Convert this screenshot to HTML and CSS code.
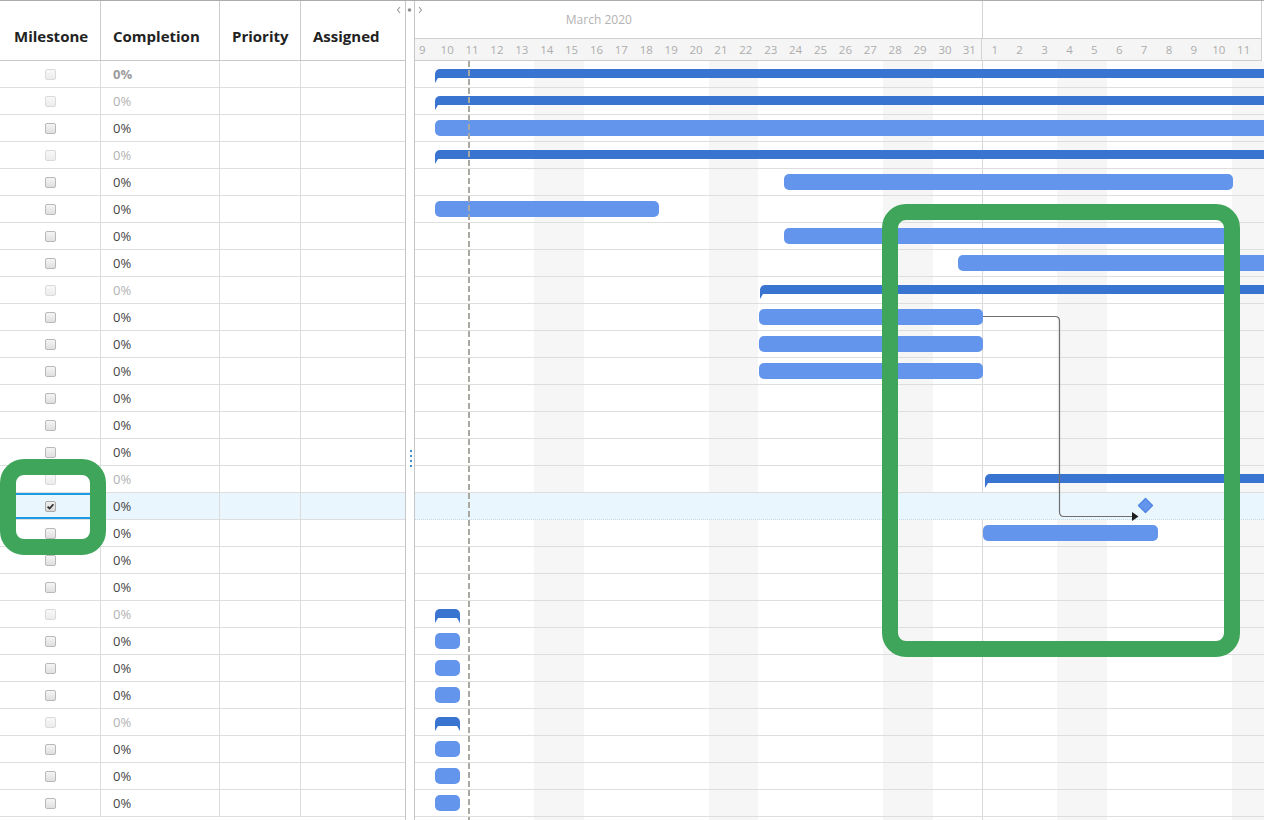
FILE: index.html
```html
<!DOCTYPE html>
<html>
<head>
<meta charset="utf-8">
<link rel="stylesheet" href="styles.css">
</head>
<body>
<div class="gantt">
  <div class="grid">
    <div class="grid-head">
      <div class="hc hc-first">Milestone</div>
      <div class="hc">Completion</div>
      <div class="hc">Priority</div>
      <div class="hc hc-last">Assigned</div>
    </div>
    <div class="grid-body">
      <div class="gr"><div class="c c-ms"><span class="cb cb-light"></span></div><div class="c c-pct pct-bold">0%</div><div class="c"></div><div class="c c-last"></div></div>
      <div class="gr"><div class="c c-ms"><span class="cb cb-light"></span></div><div class="c c-pct pct-light">0%</div><div class="c"></div><div class="c c-last"></div></div>
      <div class="gr"><div class="c c-ms"><span class="cb"></span></div><div class="c c-pct">0%</div><div class="c"></div><div class="c c-last"></div></div>
      <div class="gr"><div class="c c-ms"><span class="cb cb-light"></span></div><div class="c c-pct pct-light">0%</div><div class="c"></div><div class="c c-last"></div></div>
      <div class="gr"><div class="c c-ms"><span class="cb"></span></div><div class="c c-pct">0%</div><div class="c"></div><div class="c c-last"></div></div>
      <div class="gr"><div class="c c-ms"><span class="cb"></span></div><div class="c c-pct">0%</div><div class="c"></div><div class="c c-last"></div></div>
      <div class="gr"><div class="c c-ms"><span class="cb"></span></div><div class="c c-pct">0%</div><div class="c"></div><div class="c c-last"></div></div>
      <div class="gr"><div class="c c-ms"><span class="cb"></span></div><div class="c c-pct">0%</div><div class="c"></div><div class="c c-last"></div></div>
      <div class="gr"><div class="c c-ms"><span class="cb cb-light"></span></div><div class="c c-pct pct-light">0%</div><div class="c"></div><div class="c c-last"></div></div>
      <div class="gr"><div class="c c-ms"><span class="cb"></span></div><div class="c c-pct">0%</div><div class="c"></div><div class="c c-last"></div></div>
      <div class="gr"><div class="c c-ms"><span class="cb"></span></div><div class="c c-pct">0%</div><div class="c"></div><div class="c c-last"></div></div>
      <div class="gr"><div class="c c-ms"><span class="cb"></span></div><div class="c c-pct">0%</div><div class="c"></div><div class="c c-last"></div></div>
      <div class="gr"><div class="c c-ms"><span class="cb"></span></div><div class="c c-pct">0%</div><div class="c"></div><div class="c c-last"></div></div>
      <div class="gr"><div class="c c-ms"><span class="cb"></span></div><div class="c c-pct">0%</div><div class="c"></div><div class="c c-last"></div></div>
      <div class="gr"><div class="c c-ms"><span class="cb"></span></div><div class="c c-pct">0%</div><div class="c"></div><div class="c c-last"></div></div>
      <div class="gr"><div class="c c-ms"><span class="cb cb-light"></span></div><div class="c c-pct pct-light">0%</div><div class="c"></div><div class="c c-last"></div></div>
      <div class="gr gr-sel"><div class="c c-ms c-focus"><span class="cb cb-on"><svg width="9" height="9" viewBox="0 0 9 9"><path d="M1.6 4.6 L3.6 6.6 L7.4 2.2" fill="none" stroke="#2b2b2b" stroke-width="1.7"/></svg></span></div><div class="c c-pct">0%</div><div class="c"></div><div class="c c-last"></div></div>
      <div class="gr"><div class="c c-ms"><span class="cb"></span></div><div class="c c-pct">0%</div><div class="c"></div><div class="c c-last"></div></div>
      <div class="gr"><div class="c c-ms"><span class="cb"></span></div><div class="c c-pct">0%</div><div class="c"></div><div class="c c-last"></div></div>
      <div class="gr"><div class="c c-ms"><span class="cb"></span></div><div class="c c-pct">0%</div><div class="c"></div><div class="c c-last"></div></div>
      <div class="gr"><div class="c c-ms"><span class="cb cb-light"></span></div><div class="c c-pct pct-light">0%</div><div class="c"></div><div class="c c-last"></div></div>
      <div class="gr"><div class="c c-ms"><span class="cb"></span></div><div class="c c-pct">0%</div><div class="c"></div><div class="c c-last"></div></div>
      <div class="gr"><div class="c c-ms"><span class="cb"></span></div><div class="c c-pct">0%</div><div class="c"></div><div class="c c-last"></div></div>
      <div class="gr"><div class="c c-ms"><span class="cb"></span></div><div class="c c-pct">0%</div><div class="c"></div><div class="c c-last"></div></div>
      <div class="gr"><div class="c c-ms"><span class="cb cb-light"></span></div><div class="c c-pct pct-light">0%</div><div class="c"></div><div class="c c-last"></div></div>
      <div class="gr"><div class="c c-ms"><span class="cb"></span></div><div class="c c-pct">0%</div><div class="c"></div><div class="c c-last"></div></div>
      <div class="gr"><div class="c c-ms"><span class="cb"></span></div><div class="c c-pct">0%</div><div class="c"></div><div class="c c-last"></div></div>
      <div class="gr"><div class="c c-ms"><span class="cb"></span></div><div class="c c-pct">0%</div><div class="c"></div><div class="c c-last"></div></div>
    </div>
  </div>

  <div class="splitter">
    <div class="split-dots"><i></i><i></i><i></i><i></i></div>
  </div>

  <div class="timeline">
    <div class="tl-head">
      <div class="months">
        <div class="month month-mar">March 2020</div>
        <div class="month month-apr"></div>
      </div>
      <div class="days">
        <div class="d">9</div><div class="d">10</div><div class="d">11</div><div class="d">12</div><div class="d">13</div><div class="d">14</div><div class="d">15</div><div class="d">16</div><div class="d">17</div><div class="d">18</div><div class="d">19</div><div class="d">20</div><div class="d">21</div><div class="d">22</div><div class="d">23</div><div class="d">24</div><div class="d">25</div><div class="d">26</div><div class="d">27</div><div class="d">28</div><div class="d">29</div><div class="d">30</div><div class="d d-end">31</div><div class="d">1</div><div class="d">2</div><div class="d">3</div><div class="d">4</div><div class="d">5</div><div class="d">6</div><div class="d">7</div><div class="d">8</div><div class="d">9</div><div class="d">10</div><div class="d">11</div>
      </div>
    </div>
    <div class="tl-body">
      <div class="month-line"></div>
      <div class="today-line"></div>
      <div class="tr"><div class="bar sum" style="left:20px;width:900px"></div></div>
      <div class="tr"><div class="bar sum" style="left:20px;width:900px"></div></div>
      <div class="tr"><div class="bar task" style="left:19.7px;width:900px"></div></div>
      <div class="tr"><div class="bar sum" style="left:20px;width:900px"></div></div>
      <div class="tr"><div class="bar task" style="left:368.8px;width:449.5px"></div></div>
      <div class="tr"><div class="bar task" style="left:19.7px;width:224.1px"></div></div>
      <div class="tr"><div class="bar task" style="left:368.8px;width:449.5px"></div></div>
      <div class="tr"><div class="bar task" style="left:542.6px;width:400px"></div></div>
      <div class="tr"><div class="bar sum" style="left:344.5px;width:600px"></div></div>
      <div class="tr"><div class="bar task" style="left:343.8px;width:224.1px"></div></div>
      <div class="tr"><div class="bar task" style="left:343.8px;width:224.1px"></div></div>
      <div class="tr"><div class="bar task" style="left:343.8px;width:224.1px"></div></div>
      <div class="tr"></div>
      <div class="tr"></div>
      <div class="tr"></div>
      <div class="tr"><div class="bar sum" style="left:569.5px;width:400px"></div></div>
      <div class="tr tr-sel"><div class="diamond" style="left:725px"></div></div>
      <div class="tr"><div class="bar task" style="left:567.5px;width:175.5px"></div></div>
      <div class="tr"></div>
      <div class="tr"></div>
      <div class="tr"><div class="bar sum sum-both" style="left:20px;width:24.6px"></div></div>
      <div class="tr"><div class="bar task" style="left:19.7px;width:24.9px"></div></div>
      <div class="tr"><div class="bar task" style="left:19.7px;width:24.9px"></div></div>
      <div class="tr"><div class="bar task" style="left:19.7px;width:24.9px"></div></div>
      <div class="tr"><div class="bar sum sum-both" style="left:20px;width:24.6px"></div></div>
      <div class="tr"><div class="bar task" style="left:19.7px;width:24.9px"></div></div>
      <div class="tr"><div class="bar task" style="left:19.7px;width:24.9px"></div></div>
      <div class="tr"><div class="bar task" style="left:19.7px;width:24.9px"></div></div>
      <svg class="link" width="850" height="760" viewBox="0 0 850 760">
        <path d="M568 255.5 H640 Q644.5 255.5 644.5 260 V451 Q644.5 455.5 649 455.5 H718" fill="none" stroke="#6f6f6f" stroke-width="1.2"/>
        <polygon points="717,451 723.5,455.5 717,460" fill="#1e1e1e"/>
      </svg>
    </div>
  </div>
</div>

<svg class="split-ctrl" width="30" height="14" viewBox="0 0 30 14">
  <path d="M5 5 L2.5 8 L5 11" fill="none" stroke="#9a9a9a" stroke-width="1.1"/>
  <circle cx="14.5" cy="8" r="1.8" fill="#8f8f8f"/>
  <path d="M24 5 L26.5 8 L24 11" fill="none" stroke="#9a9a9a" stroke-width="1.1"/>
</svg>

<div class="callout callout-a"></div>
<div class="callout callout-b"></div>
</body>
</html>
```

FILE: styles.css
```css
html, body {
  margin: 0;
  padding: 0;
  background: #ffffff;
  overflow: hidden;
}

body {
  font-family: "Open Sans", "Noto Sans", "DejaVu Sans", sans-serif;
  color: #333333;
  width: 1264px;
  height: 820px;
}

.gantt {
  display: flex;
  width: 1264px;
  height: 819px;
  border-top: 1px solid #acacac;
  overflow: hidden;
}

/* ---------- left grid ---------- */
.grid {
  flex: none;
  width: 406px;
  border-right: 1px solid #c6c6c6;
  box-sizing: border-box;
  display: flex;
  flex-direction: column;
}

.grid-head {
  display: grid;
  grid-template-columns: 101px 119px 81px 104px;
  height: 59px;
  border-bottom: 1px solid #c8c8c8;
  flex: none;
}

.hc {
  display: flex;
  align-items: center;
  padding: 10px 0 0 12px;
  border-right: 1px solid #cdcdcd;
  font-size: 15px;
  font-weight: 700;
  color: #222222;
  box-sizing: border-box;
  white-space: nowrap;
}

.hc-first {
  padding-left: 14px;
}

.hc-last {
  border-right: none;
}

.gr {
  display: grid;
  grid-template-columns: 101px 119px 81px 104px;
  height: 26px;
  border-bottom: 1px solid #dedede;
}

.c {
  border-right: 1px solid #dcdcdc;
  box-sizing: border-box;
  display: flex;
  align-items: center;
}

.c-last {
  border-right: none;
}

.c-ms {
  justify-content: center;
}

.c-pct {
  padding-left: 12px;
  font-size: 13px;
  color: #444444;
}

.pct-light {
  color: #b2b2b2;
}

.pct-bold {
  color: #9c9c9c;
  font-weight: 700;
}

.gr-sel {
  background: #eaf6fd;
}

.c-focus {
  box-shadow: inset 0 2px 0 #1a9be3, inset 0 -2px 0 #1a9be3;
}

.cb {
  width: 11px;
  height: 11px;
  box-sizing: border-box;
  border: 1px solid #b9b9b9;
  border-radius: 2px;
  background: linear-gradient(#f5f5f5, #dfdfdf);
  display: flex;
  align-items: center;
  justify-content: center;
}

.cb-light {
  border-color: #dadada;
  background: linear-gradient(#f8f8f8, #ececec);
}

.cb-on {
  border-color: #a9a9a9;
  background: linear-gradient(#f0f0f0, #d8d8d8);
}

/* ---------- splitter ---------- */
.splitter {
  flex: none;
  width: 8px;
  display: flex;
  flex-direction: column;
  align-items: center;
}

.split-dots {
  margin-top: 449px;
  display: flex;
  flex-direction: column;
  gap: 3px;
  padding-left: 1px;
}

.split-dots i {
  display: block;
  width: 2px;
  height: 2px;
  background: #3b8ed4;
}

.split-ctrl {
  position: absolute;
  left: 395px;
  top: 2px;
}

/* ---------- timeline ---------- */
.timeline {
  flex: none;
  width: 850px;
  border-left: 1px solid #c6c6c6;
  box-sizing: border-box;
  display: flex;
  flex-direction: column;
  overflow: hidden;
}

.tl-head {
  flex: none;
  width: 846px;
  border-right: 1px solid #d0d0d0;
  overflow: hidden;
}

.months {
  display: flex;
  height: 37px;
  border-bottom: 1px solid #d0d0d0;
  margin-left: -5.2px;
}

.month {
  flex: none;
  box-sizing: border-box;
  display: flex;
  align-items: center;
  font-size: 12px;
  color: #b3b3b3;
  white-space: nowrap;
}

.month-mar {
  width: 572.7px;
  padding-left: 156px;
  border-right: 1px solid #d4d4d4;
}

.month-apr {
  width: 400px;
}

.days {
  display: flex;
  height: 21px;
  border-bottom: 1px solid #cdcdcd;
  margin-left: -5.2px;
  background: #f5f5f5;
}

.d {
  flex: none;
  width: 24.9px;
  box-sizing: border-box;
  display: flex;
  align-items: center;
  justify-content: center;
  font-size: 11.5px;
  color: #adadad;
}

.d-end {
  border-right: 1px solid #d4d4d4;
}

.tl-body {
  position: relative;
  flex: 1;
  background: repeating-linear-gradient(90deg,
    #ffffff 0px, #ffffff 119.3px,
    #f6f6f6 119.3px, #f6f6f6 169.1px,
    #ffffff 169.1px, #ffffff 174.3px);
}

.tr {
  position: relative;
  height: 26px;
  border-bottom: 1px solid #dedede;
}

.tr-sel {
  background: #eaf6fd;
  border-bottom: 1px dotted #c9d9e3;
}

.month-line {
  position: absolute;
  left: 567px;
  top: 0;
  bottom: 0;
  width: 1px;
  background: #d8d8d8;
}

.today-line {
  position: absolute;
  left: 53px;
  top: 0;
  bottom: 0;
  width: 2px;
  background: repeating-linear-gradient(180deg, #a9a9a2 0px, #a9a9a2 6px, transparent 6px, transparent 9px);
  z-index: 2;
}

.bar {
  position: absolute;
  z-index: 1;
}

.task {
  top: 5px;
  height: 16px;
  border-radius: 5px;
  background: #6495ed;
}

.sum {
  top: 8px;
  height: 9px;
  border-radius: 5px 5px 0 0;
  background: #3a74d1;
}

.sum::before {
  content: "";
  position: absolute;
  left: 0;
  top: 9px;
  width: 0;
  height: 0;
  border-left: 3px solid #3a74d1;
  border-bottom: 5px solid transparent;
}

.sum-both::after {
  content: "";
  position: absolute;
  right: 0;
  top: 9px;
  width: 0;
  height: 0;
  border-right: 3px solid #3a74d1;
  border-bottom: 5px solid transparent;
}

.diamond {
  position: absolute;
  top: 7px;
  width: 11px;
  height: 11px;
  box-sizing: border-box;
  background: #6495ed;
  border: 1px solid #4c82e0;
  transform: rotate(45deg);
  z-index: 1;
}

.link {
  position: absolute;
  left: 0;
  top: 0;
  z-index: 3;
}

/* ---------- annotation callouts ---------- */
.callout {
  position: absolute;
  border: 16px solid #3fa55b;
  border-radius: 24px;
  box-sizing: border-box;
  z-index: 10;
}

.callout-a {
  left: 0;
  top: 459px;
  width: 106px;
  height: 96px;
}

.callout-b {
  left: 882px;
  top: 204px;
  width: 358px;
  height: 453px;
}
```
